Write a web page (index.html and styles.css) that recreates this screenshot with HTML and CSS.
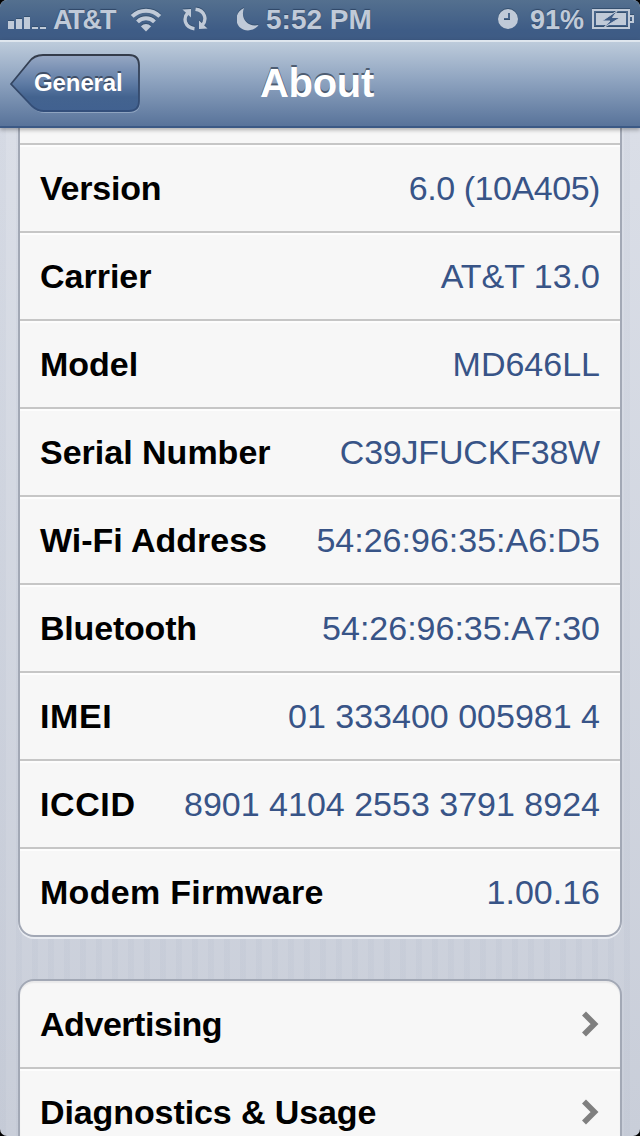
FILE: index.html
```
<!DOCTYPE html>
<html lang="en">
  <head>
    <meta charset="UTF-8" />
    <meta name="viewport" content="width=device-width, initial-scale=1.0" />
    <title>About</title>
    <link rel="stylesheet" href="styles.css">
  </head>
  <body>
    <div class="screen">
      <header class="status-bar">
        <div class="status-left">
          <svg class="signal" width="38" height="14" viewBox="0 0 38 14">
            <path d="M0 6h6v8H0zM8 4h6v10H8zM16 2h6v12h-6zM24 12h6v2h-6zM32 12h6v2h-6z" />
          </svg>
          <span class="network">AT&amp;T</span>
          <svg class="wifi" width="32" height="24" viewBox="0 0 32 24">
            <path class="line" d="M2.2 8.4a19.5 19.5 0 0 1 27.6 0M7.5 13.8a12 12 0 0 1 17 0" />
            <path d="M10.8 18.2q5.2-4.2 10.4 0L16 23.4z" />
          </svg>
          <svg class="sync" width="26" height="24" viewBox="0 0 26 24">
            <path class="line thin" d="M12.500 21.700C3 20.500 .5 11.500 6 5.500M13.500 2.300C23 3.500 25.500 12.500 20 18.500" />
            <path d="M.5 2.500L9 2L9 10.500zM25.500 21.500L17 22L17 13.500z" />
          </svg>
        </div>
        <div class="status-mid">
          <svg class="moon" width="22" height="23" viewBox="0 0 22 23">
            <path d="M7 0C-2 4-2.500 14.500 3 19.500C9 24.700 18 22.500 21.500 17C10.500 19.500 3 10 7 0z" />
          </svg>
          <span class="time">5:52 PM</span>
        </div>
        <div class="status-right">
          <svg class="clock" width="20" height="20" viewBox="0 0 20 20">
            <path fill-rule="evenodd" d="M10 0a10 10 0 1 1 0 20a10 10 0 1 1 0-20zM10 4v5H6v2H12V4z" />
          </svg>
          <span class="percent">91%</span>
          <svg class="battery" width="42" height="20" viewBox="0 0 42 20">
            <path fill-rule="evenodd" d="M0 0h38v6h4v8h-4v6H0zM2 2v16h34V2zM38 8v4h2V8z" />
            <path d="M4 4h30v12H4z" />
            <path class="bolt" d="M25.500 1.500L10 12h8l-6 6.500L28.500 8.500h-8z" />
          </svg>
        </div>
      </header>

      <nav class="nav-bar">
        <a class="back">
          <svg class="back-shape" width="132" height="62" viewBox="0 0 132 62">
            <defs>
              <linearGradient id="back-fill" x1="0" y1="0" x2="0" y2="1">
                <stop offset="0" stop-color="#97a8c4" />
                <stop offset=".5" stop-color="#5f7ca5" />
                <stop offset=".75" stop-color="#43638f" />
                <stop offset="1" stop-color="#416190" />
              </linearGradient>
              <linearGradient id="back-edge" x1="0" y1="0" x2="0" y2="1">
                <stop offset="0" stop-color="#343c4a" />
                <stop offset="1" stop-color="#334f7b" />
              </linearGradient>
            </defs>
            <path class="back-glow" d="M3 32L21 9Q26 3 34 3H120Q131 3 131 13V49Q131 59 120 59H36Q29 59 24 54z" />
            <path class="back-body" d="M2 30L20 8Q25 1 34 1H120Q130 1 130 11V47Q130 57 120 57H35Q28 57 23 52z" />
          </svg>
          <span class="back-text">General</span>
        </a>
        <h1>About</h1>
      </nav>

      <main>
        <ul class="group first">
          <li class="cut"></li>
          <li><b class="snug">Version</b><span class="tight">6.0 (10A405)</span></li>
          <li><b>Carrier</b><span>AT&amp;T 13.0</span></li>
          <li><b>Model</b><span>MD646LL</span></li>
          <li><b>Serial Number</b><span class="snug">C39JFUCKF38W</span></li>
          <li><b>Wi-Fi Address</b><span>54:26:96:35:A6:D5</span></li>
          <li><b class="snug">Bluetooth</b><span>54:26:96:35:A7:30</span></li>
          <li><b class="wide">IMEI</b><span>01 333400 005981 4</span></li>
          <li><b class="wide">ICCID</b><span>8901 4104 2553 3791 8924</span></li>
          <li><b class="loose">Modem Firmware</b><span>1.00.16</span></li>
        </ul>
        <ul class="group links">
          <li>
            <b class="tight">Advertising</b>
            <svg class="chevron" width="18" height="26" viewBox="0 0 18 26"><path d="M2 2.500L12.500 13L2 23.500" /></svg>
          </li>
          <li>
            <b class="usage">Diagnostics &amp; Usage</b>
            <svg class="chevron" width="18" height="26" viewBox="0 0 18 26"><path d="M2 2.500L12.500 13L2 23.500" /></svg>
          </li>
        </ul>
      </main>
    </div>
  </body>
</html>
```
FILE: styles.css
```
* {
  box-sizing: border-box;
}
body {
  margin: 0;
  background-color: #000;
  font-family: "Liberation Sans", Arial, sans-serif;
}
.screen {
  display: flex;
  flex-direction: column;
  height: 1136px;
  width: 640px;
  overflow: hidden;
  border-radius: 7px;
  background:
    repeating-linear-gradient(90deg, rgba(120, 135, 165, 0.05) 0 6px, transparent 6px 16px),
    linear-gradient(#dadee7 128px, #c9ced9);
}
.status-bar {
  display: flex;
  flex: none;
  position: relative;
  height: 40px;
  color: #c0cad8;
  background: linear-gradient(#54708f, #3e5c86 75%, #3e5b84);
  font-size: 27px;
  font-weight: bold;
  line-height: 40px;
  text-shadow: 0 -1px 1px #2f4666;
}
.status-bar svg {
  fill: #c0cad8;
  filter: drop-shadow(0 -1px 0 #35506f);
  flex: none;
}
.status-bar .line {
  fill: none;
  stroke: #c0cad8;
  stroke-width: 4;
}
.status-bar .thin {
  stroke-width: 3.4;
}
.status-left {
  display: flex;
  width: 237px;
  padding-left: 8px;
}
.signal {
  margin-top: 15px;
}
.network {
  width: 62px;
  margin-left: 7px;
  letter-spacing: -2.2px;
  white-space: nowrap;
}
.wifi {
  margin: 8px 0 0 15px;
}
.sync {
  margin: 7px 0 0 20px;
}
.status-mid {
  display: flex;
  width: 261px;
}
.moon {
  margin-top: 8px;
}
.time {
  margin-left: 7px;
  font-size: 28px;
}
.status-right {
  display: flex;
}
.clock {
  margin-top: 9px;
}
.percent {
  width: 54px;
  margin-left: 12px;
}
.battery {
  margin: 9px 0 0 8px;
}
.battery .bolt {
  fill: #3e5c86;
  stroke: #c0cad8;
  stroke-width: 1;
}
.nav-bar {
  display: grid;
  grid-template-columns: 260px 1fr;
  flex: none;
  position: relative;
  z-index: 1;
  height: 88px;
  border-top: 2px solid #dfe6ee;
  border-bottom: 2px solid #3b5985;
  background: linear-gradient(#bdcbdb, #8fa4c0 45%, #58739a);
  box-shadow: 0 2px 4px rgba(0, 0, 0, 0.3);
}
.back {
  display: grid;
  width: 132px;
  margin: 12px 0 0 9px;
}
.back-shape,
.back-text {
  grid-area: 1 / 1;
}
.back-body {
  fill: url(#back-fill);
  stroke: url(#back-edge);
  stroke-width: 1.8;
}
.back-glow {
  fill: #8fa4c0;
}
.back-text {
  position: relative;
  padding-left: 25px;
  color: #fff;
  font-size: 24px;
  font-weight: bold;
  letter-spacing: -0.1px;
  line-height: 58px;
  text-shadow: 0 -2px 0 #3f4e66;
}
h1 {
  margin: 0;
  color: #fff;
  font-size: 40px;
  letter-spacing: -0.3px;
  line-height: 83px;
  text-shadow: 0 -2px 0 #4e5d72;
}
.group {
  margin: 0 18px;
  padding: 0;
  list-style: none;
  border: 2px solid #a2a8b5;
  border-radius: 16px;
  background-color: #f7f7f7;
}
.first {
  border-top: 0;
  border-top-left-radius: 0;
  border-top-right-radius: 0;
  box-shadow: 0 2px 0 #e8ebf1;
}
.links {
  margin-top: 42px;
  box-shadow: inset 0 2px 1px #e9e9ea;
}
.group li {
  display: flex;
  justify-content: space-between;
  height: 88px;
  padding: 0 20px;
  border-bottom: 2px solid #c6c6c6;
  box-shadow: inset 0 2px 0 #fdfdfd;
  font-size: 34px;
  line-height: 87px;
  white-space: nowrap;
}
.group .cut {
  height: 17px;
  box-shadow: none;
}
.first li:last-child {
  height: 86px;
  border-bottom: 0;
}
.links li:first-child {
  box-shadow: none;
}
.group span {
  color: #385487;
}
.tight {
  letter-spacing: -0.45px;
}
.snug {
  letter-spacing: -0.2px;
}
.loose {
  letter-spacing: 0.3px;
}
.wide {
  letter-spacing: 0.6px;
}
.usage {
  letter-spacing: -0.1px;
}
.chevron {
  margin: 30px 0 0;
  fill: none;
  stroke: #7f7f7f;
  stroke-width: 5.6;
}
```
